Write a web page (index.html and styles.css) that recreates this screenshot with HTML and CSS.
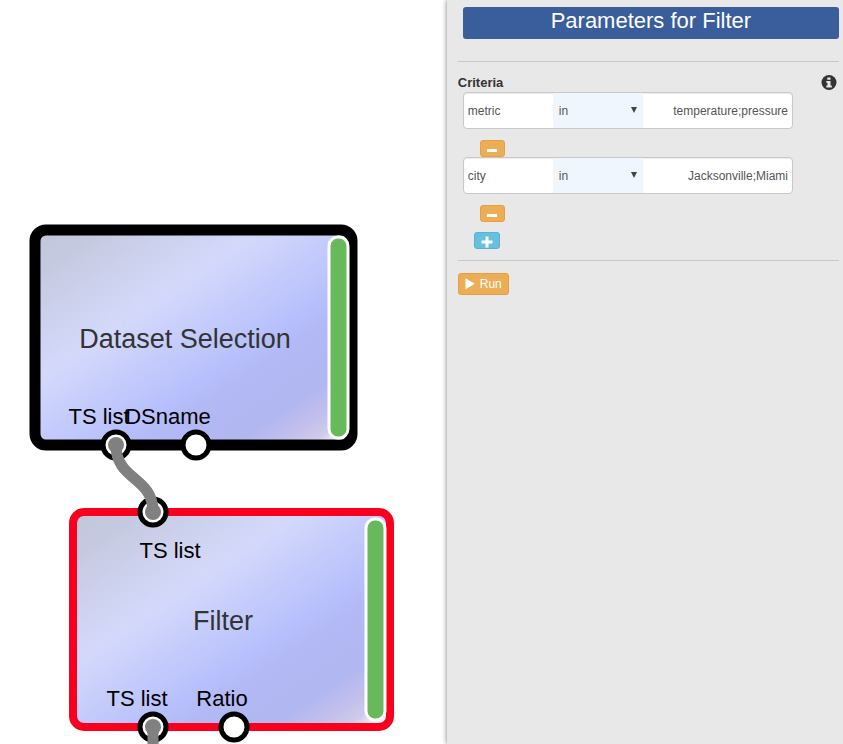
FILE: index.html
```html
<!DOCTYPE html>
<html lang="en">
<head>
<meta charset="utf-8">
<title>Workflow</title>
<link rel="stylesheet" href="styles.css">
</head>
<body>
<main class="workspace">
  <section class="canvas" aria-label="Workflow diagram">
    <svg class="diagram" xmlns="http://www.w3.org/2000/svg">
      <defs>
        <linearGradient id="glass" x1="0" y1="0" x2="1" y2="1">
          <stop offset="0" stop-color="#c2c6da"/>
          <stop offset="0.1" stop-color="#c5c9df"/>
          <stop offset="0.35" stop-color="#d4d9fb"/>
          <stop offset="0.62" stop-color="#b6bffc"/>
          <stop offset="0.67" stop-color="#b3b9f4"/>
          <stop offset="0.81" stop-color="#b1b7f1"/>
          <stop offset="0.88" stop-color="#c2bfec"/>
          <stop offset="0.93" stop-color="#d0cbea"/>
          <stop offset="0.96" stop-color="#efedf2"/>
          <stop offset="1" stop-color="#f4f4f4"/>
        </linearGradient>
      </defs>
      <g class="node">
        <rect class="box box-dataset" x="35" y="230" width="317" height="215" rx="11"/>
        <rect class="status" x="329" y="237" width="19" height="201" rx="9"/>
        <text class="node-title" x="185" y="348">Dataset Selection</text>
        <text class="port-label" x="99" y="424">TS list</text>
        <text class="port-label" x="168" y="424">DSname</text>
        <circle class="port" cx="116" cy="445" r="13"/>
        <circle class="port" cx="196" cy="445" r="13"/>
      </g>
      <g class="node">
        <rect class="box box-filter" x="73" y="512" width="317" height="215" rx="11"/>
        <rect class="status" x="366" y="519" width="19" height="201" rx="9"/>
        <text class="node-title" x="223" y="630">Filter</text>
        <text class="port-label" x="170" y="558">TS list</text>
        <text class="port-label" x="137" y="706">TS list</text>
        <text class="port-label" x="222" y="706">Ratio</text>
        <circle class="port" cx="153" cy="512" r="13"/>
        <circle class="port" cx="153" cy="727" r="13"/>
        <circle class="port" cx="234" cy="727" r="13"/>
      </g>
      <circle class="plug" cx="116" cy="445" r="8"/>
      <circle class="plug" cx="153" cy="512" r="8"/>
      <circle class="plug" cx="153" cy="727" r="8"/>
      <path class="wire" d="M116 445C116 481 153 476 153 512"/>
      <path class="wire" d="M153 727V800"/>
    </svg>
  </section>

  <aside class="panel">
    <h1 class="panel-title">Parameters for Filter</h1>
    <form class="params">
      <fieldset class="criteria" aria-labelledby="criteria-label">
        <div class="criteria-head">
          <span class="label" id="criteria-label">Criteria</span>
          <button class="info" type="button" aria-label="Information">
            <svg viewBox="0 0 16 16" width="16" height="16"><circle cx="8" cy="7.5" r="7.5" fill="#333"/><path d="M6.3 2.4h3.2v2.3H6.3zM5.3 5.9h4.2v4.7h1.3v1.9H5.3v-1.9h1.2V7.7H5.3z" fill="#e8e8e8"/></svg>
          </button>
        </div>
        <div class="row">
          <input class="field" type="text" value="metric" aria-label="Property 1">
          <div class="pick"><select class="operator" aria-label="Operator 1"><option>in</option><option>=</option></select></div>
          <input class="field value" type="text" value="temperature;pressure" aria-label="Value 1">
        </div>
        <button class="btn btn-warning btn-icon remove" type="button" aria-label="Remove criterion 1"><svg viewBox="0 0 12 12" width="12" height="12"><rect x="1" y="5" width="10" height="3" rx="0.6" fill="#fff"/></svg></button>
        <div class="row">
          <input class="field" type="text" value="city" aria-label="Property 2">
          <div class="pick"><select class="operator" aria-label="Operator 2"><option>in</option><option>=</option></select></div>
          <input class="field value" type="text" value="Jacksonville;Miami" aria-label="Value 2">
        </div>
        <button class="btn btn-warning btn-icon remove" type="button" aria-label="Remove criterion 2"><svg viewBox="0 0 12 12" width="12" height="12"><rect x="1" y="5" width="10" height="3" rx="0.6" fill="#fff"/></svg></button>
        <button class="btn btn-info btn-icon add" type="button" aria-label="Add criterion"><svg viewBox="0 0 12 12" width="12" height="12"><path d="M4.5 .6h3v4h4v3h-4v4h-3v-4h-4v-3h4z" fill="#fff"/></svg></button>
      </fieldset>
      <button class="btn btn-warning run" type="button"><svg viewBox="0 0 10 12" width="10" height="12"><path d="M.5 .3v11L9.8 5.8z" fill="#fff"/></svg>Run</button>
    </form>
  </aside>
</main>
</body>
</html>
```
FILE: styles.css
```css
* {
  box-sizing: border-box;
}

body {
  margin: 0;
  background: #fff;
  color: #333;
  font: 12px/18px "Liberation Sans", Arial, sans-serif;
}

.workspace {
  display: grid;
  grid-template-columns: 53fr 47fr;
  min-height: 100vh;
}

.canvas {
  display: flex;
  min-width: 0;
  overflow: hidden;
}

.diagram {
  flex: 1;
  width: 100%;
  min-width: 0;
}

.box {
  fill: url(#glass);
}

.box-dataset {
  stroke: #000;
  stroke-width: 11px;
}

.box-filter {
  stroke: #f9001f;
  stroke-width: 8px;
}

.status {
  fill: #68b85c;
  stroke: #fff;
  stroke-width: 3px;
}

.node-title {
  fill: #333;
  font-size: 27px;
  text-anchor: middle;
}

.port-label {
  fill: #000;
  font-size: 22px;
  text-anchor: middle;
}

.port {
  fill: #fff;
  stroke: #000;
  stroke-width: 5px;
}

.plug {
  fill: #808080;
}

.wire {
  fill: none;
  stroke: #808080;
  stroke-width: 11px;
}

.panel {
  min-width: 0;
  padding: 7px 4px 16px 11px;
  background: #e8e8e8;
  box-shadow: 0 0 5px #777;
}

.panel-title {
  height: 32px;
  margin: 0 0 22px 5px;
  border-radius: 3px;
  background: #3a5e9c;
  color: #fff;
  font-size: 22px;
  font-weight: 400;
  line-height: 27px;
  text-align: center;
}

.criteria {
  display: flex;
  flex-direction: column;
  align-items: flex-start;
  min-width: 0;
  margin: 0 0 12px;
  padding: 12px 0 11px;
  border: 0 solid #c8c8c8;
  border-width: 1px 0;
}

.criteria-head {
  display: flex;
  align-items: center;
  justify-content: space-between;
  align-self: stretch;
  height: 18px;
  padding-right: 2px;
}

.label {
  font-size: 13px;
  font-weight: 700;
}

.info {
  display: flex;
  padding: 0;
  border: 0;
  background: none;
}

.row {
  display: grid;
  grid-template-columns: 89px 90px 1fr;
  align-self: stretch;
  height: 37px;
  margin: 0 46px 0 5px;
  overflow: hidden;
  border: 1px solid #c8c8c8;
  border-radius: 4px;
  background: #fff;
  box-shadow: inset 0 1px 1px rgb(0 0 0 / 8%);
}

.field,
.operator {
  width: 100%;
  min-width: 0;
  height: 100%;
  padding: 0 4px;
  border: 0;
  background: transparent;
  color: #555;
  font: inherit;
}

.value {
  text-align: right;
}

.pick {
  position: relative;
  background: #f0f6fe;
}

.operator {
  padding-left: 6px;
  appearance: none;
}

.pick::after {
  position: absolute;
  top: 14px;
  right: 6px;
  border: 3px solid transparent;
  border-top: 6px solid #444;
  border-bottom: 0;
  content: "";
  pointer-events: none;
}

.btn {
  display: flex;
  align-items: center;
  border: 1px solid;
  border-radius: 3px;
  color: #fff;
  font: inherit;
}

.btn-warning {
  border-color: #eb9f3c;
  background: #ebad55;
}

.btn-info {
  border-color: #50b5d6;
  background: #68bfde;
}

.btn-icon {
  justify-content: center;
  width: 25px;
  height: 17px;
  padding: 2px 0 0;
}

.remove {
  margin: 11px 0 0 22px;
}

.add {
  width: 26px;
  margin: 10px 0 0 16px;
}

.run {
  gap: 5px;
  height: 22px;
  padding: 0 6px;
}
```
